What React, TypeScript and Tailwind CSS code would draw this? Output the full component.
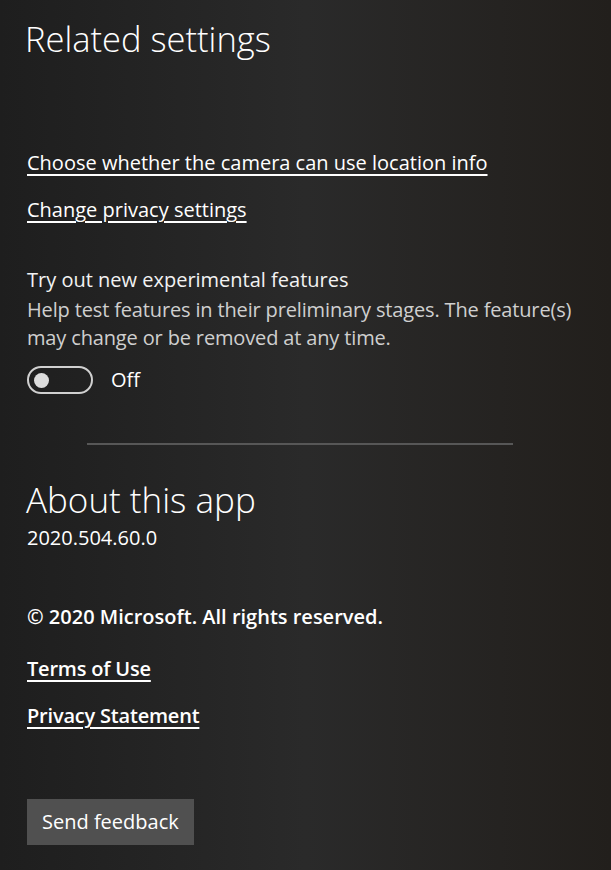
export default function App() {
  return (
    <div className="min-h-[870px] w-full overflow-hidden bg-linear-to-r from-[#1e1e1e] via-[#2a2a2a] to-[#221f1c] pl-[27px] pt-[15px] font-['Open_Sans','Noto_Sans',sans-serif] text-white">
      <h1 className="text-[34.5px] font-light leading-[48px] -ml-[2px]">Related settings</h1>

      <a href="#" className="mt-[86px] block w-fit text-[20px] leading-[28px] underline decoration-[1.5px] underline-offset-[4px]">
        Choose whether the camera can use location info
      </a>
      <a href="#" className="mt-[19px] block w-fit text-[20px] leading-[28px] underline decoration-[1.5px] underline-offset-[4px]">
        Change privacy settings
      </a>

      <div className="mt-[42px] text-[20px] leading-[28px] text-[#f2f2f2]">Try out new experimental features</div>
      <p className="mt-[2px] text-[20px] leading-[28px] tracking-[-0.15px] text-[#cfcfcf]">
        Help test features in their preliminary stages. The feature(s)
        <br />
        may change or be removed at any time.
      </p>

      <div className="mt-[14px] flex h-[28px] items-center">
        <button
          type="button"
          className="flex h-[28px] w-[66px] items-center rounded-full border-[2.5px] border-[#d0d0d0] pl-[5px]"
        >
          <span className="h-[15px] w-[15px] rounded-full bg-[#dcdcdc]" />
        </button>
        <span className="ml-[18px] text-[20px] leading-[28px]">Off</span>
      </div>

      <div className="mt-[49px] ml-[60px] h-[2px] w-[426px] bg-[#575757]" />

      <h2 className="mt-[31px] text-[35px] font-light leading-[48px] -ml-[1px]">About this app</h2>
      <div className="text-[20px] leading-[28px]">2020.504.60.0</div>

      <div className="mt-[51px] text-[20px] font-semibold leading-[28px]">© 2020 Microsoft. All rights reserved.</div>
      <a href="#" className="mt-[24px] block w-fit text-[20px] font-semibold leading-[28px] tracking-[-0.2px] underline decoration-[1.5px] underline-offset-[4px]">
        Terms of Use
      </a>
      <a href="#" className="mt-[19px] block w-fit text-[20px] font-semibold leading-[28px] tracking-[-0.2px] underline decoration-[1.5px] underline-offset-[4px]">
        Privacy Statement
      </a>

      <button type="button" className="mt-[69px] h-[46px] bg-[#505050] px-[15px] text-[20px] leading-[28px] text-white">
        Send feedback
      </button>
    </div>
  );
}
